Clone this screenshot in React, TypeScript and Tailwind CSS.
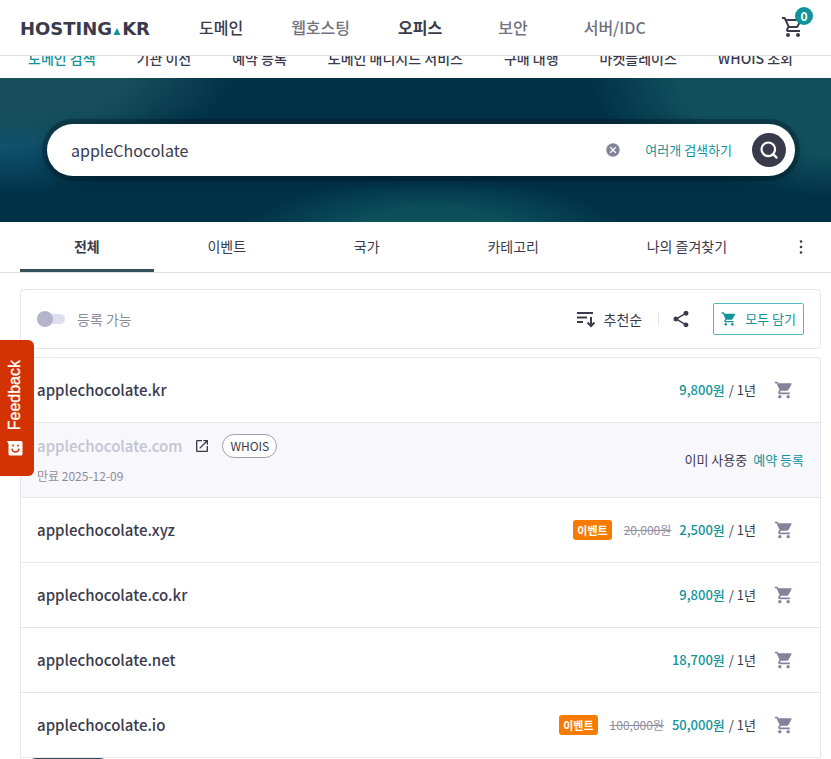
import React, { useState } from 'react';
import {
  MdCancel,
  MdOpenInNew,
  MdOutlineShoppingCart,
  MdShare,
  MdShoppingCart
} from 'react-icons/md';

interface DomainResult {
  name: string;
  price?: string;
  originalPrice?: string;
  expires?: string;
}

const mainMenu = [
  { label: '도메인', className: 'font-medium text-[#3a3a4c]' },
  { label: '웹호스팅', className: 'font-medium text-[#71717f]' },
  { label: '오피스', className: 'font-bold text-[#3a3a4c] mr-2' },
  { label: '보안', className: 'font-medium text-[#71717f] mr-2' },
  { label: '서버/IDC', className: 'font-medium text-[#71717f]' }
];

const subMenu = [
  '도메인 검색',
  '기관 이전',
  '예약 등록',
  '도메인 매니지드 서비스',
  '구매 대행',
  '마켓플레이스',
  'WHOIS 조회'
];

const tabs = ['전체', '이벤트', '국가', '카테고리', '나의 즐겨찾기'];

const results: DomainResult[] = [
  { name: 'applechocolate.kr', price: '9,800원' },
  { name: 'applechocolate.com', expires: '2025-12-09' },
  { name: 'applechocolate.xyz', price: '2,500원', originalPrice: '20,000원' },
  { name: 'applechocolate.co.kr', price: '9,800원' },
  { name: 'applechocolate.net', price: '18,700원' },
  { name: 'applechocolate.io', price: '50,000원', originalPrice: '100,000원' }
];

function Logo() {
  return (
    <a
      href="#"
      className="flex items-baseline pt-1 font-['DejaVu_Sans',sans-serif] text-lg leading-6 font-bold text-[#3a3a4c]"
    >
      HOSTING
      <svg width="10" height="7" viewBox="0 0 10 7" aria-hidden="true">
        <path d="M5 0 8.500 7h-7z" fill="#10939a" />
      </svg>
      KR
    </a>
  );
}

function SearchIcon() {
  return (
    <svg width="20" height="20" viewBox="0 0 20 20" fill="none" stroke="currentColor" strokeWidth="2.2" aria-hidden="true">
      <circle cx="9.3" cy="9.3" r="6.8" />
      <path d="m14 14 3.6 3.6" strokeLinecap="round" />
    </svg>
  );
}

function SortIcon() {
  return (
    <svg width="20" height="18" viewBox="0 0 20 18" fill="none" stroke="currentColor" strokeWidth="2" aria-hidden="true">
      <path d="M1 3h16M1 7.500h10M1 12h6M15 7v9M11.500 12.500 15 16l3.500-3.500" />
    </svg>
  );
}

function MoreIcon() {
  return (
    <svg width="4" height="16" viewBox="0 0 4 16" fill="currentColor" aria-hidden="true">
      <circle cx="2" cy="2.5" r="1.3" />
      <circle cx="2" cy="8" r="1.3" />
      <circle cx="2" cy="13.5" r="1.3" />
    </svg>
  );
}

function FeedbackButton() {
  return (
    <button
      type="button"
      className="fixed left-0 top-[340px] flex h-[136px] w-[34px] flex-col items-center justify-end gap-2.5 rounded-r-md bg-[#d33202] pr-1 pb-5 text-white"
    >
      <span className="rotate-180 font-['Liberation_Sans',sans-serif] text-base leading-5 [-webkit-text-stroke:0.3px_white] [writing-mode:vertical-rl]">
        Feedback
      </span>
      <svg width="16" height="16" viewBox="0 0 16 16" aria-hidden="true">
        <path d="M0 1h14a1.500 1.500 0 0 1 1.500 1.500V14a1.500 1.500 0 0 1-1.500 1.500H3A1.500 1.500 0 0 1 1.500 14V4z" fill="#fff" />
        <path d="M5 8.500a3.500 3.500 0 0 0 7 0M6 4.500v2M11 4.500v2" fill="none" stroke="#d33202" strokeWidth="1.500" />
      </svg>
    </button>
  );
}

function ResultRow({ item }: { item: DomainResult }) {
  if (item.expires) {
    return (
      <li className="flex h-[75px] items-center justify-between border-b border-[#e6e6ec] bg-[#f7f7fc] px-4">
        <div className="flex flex-col gap-2">
          <div className="flex items-center">
            <span className="text-[15px] leading-6 font-medium text-[#c3c3d1]">{item.name}</span>
            <a href="#" aria-label="사이트 열기" className="ml-3 text-[#3a3a4c]">
              <MdOpenInNew size={16} />
            </a>
            <button
              type="button"
              className="ml-3 h-6 rounded-full border border-[#a0a0b2] bg-white px-[7px] text-xs leading-5 text-[#3a3a4c]"
            >
              WHOIS
            </button>
          </div>
          <p className="text-xs leading-5 text-[#8c8c9b]">만료 {item.expires}</p>
        </div>
        <p className="text-[13px] leading-5 text-[#3a3a4c]">
          이미 사용중
          <a href="#" className="ml-1.5 text-[#10939a]">예약 등록</a>
        </p>
      </li>
    );
  }

  return (
    <li className="flex h-[65px] items-center justify-between border-b border-[#e6e6ec] px-4">
      <span className="text-[15px] leading-6 font-medium text-[#3a3a4c]">{item.name}</span>
      <div className="flex items-center text-[13px] leading-5 text-[#3a3a4c]">
        {item.originalPrice && (
          <>
            <span className="mr-3 rounded-[3px] bg-[#f57c00] px-1 text-[11px] leading-5 font-bold text-white">이벤트</span>
            <del className="mr-2 text-xs leading-5 text-[#9090a3]">{item.originalPrice}</del>
          </>
        )}
        <span className="font-medium text-[#10939a]">{item.price}</span>
        <span className="ml-1">/ 1년</span>
        <button type="button" aria-label="장바구니 담기" className="ml-2 flex w-10 justify-center text-[#83839c]">
          <MdShoppingCart size={20} />
        </button>
      </div>
    </li>
  );
}

export default function App() {
  const [query, setQuery] = useState('appleChocolate');
  const [activeTab, setActiveTab] = useState('전체');

  return (
    <div className="min-h-screen bg-white font-['Noto_Sans_CJK_KR',sans-serif] text-[#3a3a4c]">
      {/* Header */}
      <header className="flex h-14 items-center border-b border-[#dcdce2] px-5 pb-0.5">
        <Logo />
        <nav className="ml-[49px] flex items-center gap-12 text-base leading-6">
          {mainMenu.map((item) => (
            <a key={item.label} href="#" className={item.className}>{item.label}</a>
          ))}
        </nav>
        <a href="#" aria-label="장바구니" className="relative ml-auto mr-1.5">
          <MdOutlineShoppingCart size={24} />
          <span className="absolute -top-2 left-3.5 flex h-[18px] w-[18px] items-center justify-center rounded-full bg-[#10939a] text-xs font-bold text-white">
            0
          </span>
        </a>
      </header>

      {/* Sub menu, scrolled partly under the header */}
      <nav className="flex h-[22px] items-end justify-between overflow-hidden pr-[38px] pb-2.5 pl-7 text-sm leading-5 font-medium">
        {subMenu.map((label, i) => (
          <a key={label} href="#" className={i === 0 ? 'text-[#10939a]' : ''}>{label}</a>
        ))}
      </nav>

      {/* Search */}
      <section className="flex h-36 items-center bg-[#003147] bg-[radial-gradient(ellipse_220px_75px_at_2%_0%,#164f5b_50%,transparent),radial-gradient(ellipse_170px_60px_at_0%_40%,#10516d_20%,transparent),radial-gradient(ellipse_260px_120px_at_102%_0%,#114f5c_65%,transparent),radial-gradient(ellipse_190px_50px_at_52%_105%,#0c4f5a_40%,transparent)] pr-9 pl-[47px]">
        <form
          onSubmit={(e) => e.preventDefault()}
          className="flex h-13 flex-1 items-center rounded-full bg-white pr-[9px] pl-6 shadow-[0_0_0_5px_rgba(0,20,30,0.3),0_3px_8px_4px_rgba(0,20,30,0.2)]"
        >
          <input
            aria-label="도메인 검색어"
            value={query}
            onChange={(e) => setQuery(e.target.value)}
            className="min-w-0 flex-1 text-base leading-6 outline-none"
          />
          <button type="button" aria-label="지우기" onClick={() => setQuery('')} className="text-[#83839c]">
            <MdCancel size={16} />
          </button>
          <button type="button" className="ml-6 text-[13px] leading-5 text-[#10939a]">여러개 검색하기</button>
          <button
            type="submit"
            aria-label="검색"
            className="ml-5 flex h-[34px] w-[34px] items-center justify-center rounded-full bg-[#3a3a4c] text-white"
          >
            <SearchIcon />
          </button>
        </form>
      </section>

      {/* Category tabs */}
      <div className="flex h-[51px] border-b border-[#dcdce2] pr-2.5 pl-5">
        <div role="tablist" className="flex flex-1">
          {tabs.map((tab) => (
            <button
              key={tab}
              type="button"
              role="tab"
              aria-selected={tab === activeTab}
              onClick={() => setActiveTab(tab)}
              className={`flex-auto border-b-3 text-sm leading-5 ${
                tab === activeTab ? 'border-[#35505b] font-bold' : 'border-transparent'
              }`}
            >
              {tab}
            </button>
          ))}
        </div>
        <button type="button" aria-label="더보기" className="flex w-10 items-center justify-center">
          <MoreIcon />
        </button>
      </div>

      <main className="pt-4 pr-2.5 pl-5">
        {/* Filter bar */}
        <div className="flex h-[60px] items-center rounded border border-[#e6e6ec] px-4">
          <label className="flex items-center gap-3 text-sm leading-5 text-[#8c8c9b]">
            <input
              type="checkbox"
              role="switch"
              className="relative h-2.5 w-7 appearance-none rounded-full bg-[#dedef0] before:absolute before:-top-[3px] before:left-0 before:h-4 before:w-4 before:rounded-full before:bg-[#b4b4cc] checked:before:left-3"
            />
            등록 가능
          </label>
          <button type="button" className="ml-auto flex items-center gap-2 text-sm leading-5">
            <SortIcon />
            추천순
          </button>
          <span className="ml-4 h-3.5 w-px bg-[#e6e6ec]" />
          <button type="button" aria-label="공유" className="ml-3">
            <MdShare size={20} />
          </button>
          <button
            type="button"
            className="ml-[22px] flex h-8 items-center gap-2 rounded-xs border border-[#4fb9be] px-[7px] text-[13px] leading-5 text-[#10939a]"
          >
            <MdShoppingCart size={16} />
            모두 담기
          </button>
        </div>

        {/* Results */}
        <ul className="mt-2 rounded-t border border-b-0 border-[#e6e6ec]">
          {results.map((item) => (
            <ResultRow key={item.name} item={item} />
          ))}
        </ul>
      </main>

      <FeedbackButton />
      <div className="fixed -bottom-[31px] left-7 h-8 w-20 rounded-lg bg-[#35505b]" />
    </div>
  );
}
